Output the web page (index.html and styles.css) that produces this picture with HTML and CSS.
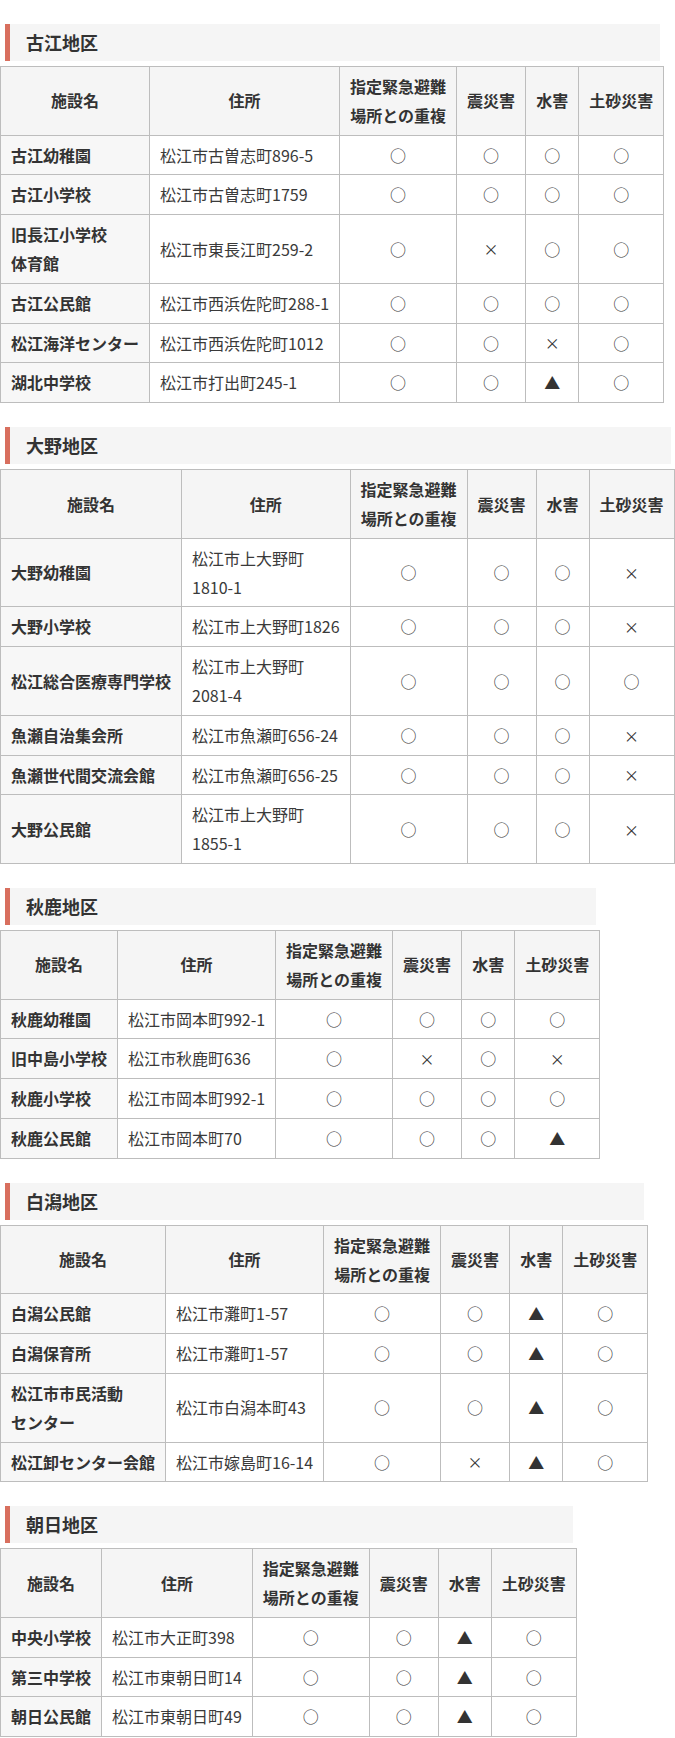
FILE: index.html
```html
<!DOCTYPE html>
<html lang="ja">
<head>
<meta charset="utf-8">
<title>指定避難所一覧</title>
<link rel="stylesheet" href="styles.css">
</head>
<body>
<main class="page">

<section class="area">
<h3 class="area-title">古江地区</h3>
<table class="shelter">
<thead>
<tr><th>施設名</th><th>住所</th><th>指定緊急避難<br>場所との重複</th><th>震災害</th><th>水害</th><th>土砂災害</th></tr>
</thead>
<tbody>
<tr><th>古江幼稚園</th><td>松江市古曽志町896-5</td><td class="m">○</td><td class="m">○</td><td class="m">○</td><td class="m">○</td></tr>
<tr><th>古江小学校</th><td>松江市古曽志町1759</td><td class="m">○</td><td class="m">○</td><td class="m">○</td><td class="m">○</td></tr>
<tr><th>旧長江小学校<br>体育館</th><td>松江市東長江町259-2</td><td class="m">○</td><td class="m x">×</td><td class="m">○</td><td class="m">○</td></tr>
<tr><th>古江公民館</th><td>松江市西浜佐陀町288-1</td><td class="m">○</td><td class="m">○</td><td class="m">○</td><td class="m">○</td></tr>
<tr><th>松江海洋センター</th><td>松江市西浜佐陀町1012</td><td class="m">○</td><td class="m">○</td><td class="m x">×</td><td class="m">○</td></tr>
<tr><th>湖北中学校</th><td>松江市打出町245-1</td><td class="m">○</td><td class="m">○</td><td class="m">▲</td><td class="m">○</td></tr>
</tbody>
</table>
</section>

<section class="area">
<h3 class="area-title">大野地区</h3>
<table class="shelter">
<thead>
<tr><th>施設名</th><th>住所</th><th>指定緊急避難<br>場所との重複</th><th>震災害</th><th>水害</th><th>土砂災害</th></tr>
</thead>
<tbody>
<tr><th>大野幼稚園</th><td>松江市上大野町<br>1810-1</td><td class="m">○</td><td class="m">○</td><td class="m">○</td><td class="m x">×</td></tr>
<tr><th>大野小学校</th><td>松江市上大野町1826</td><td class="m">○</td><td class="m">○</td><td class="m">○</td><td class="m x">×</td></tr>
<tr><th>松江総合医療専門学校</th><td>松江市上大野町<br>2081-4</td><td class="m">○</td><td class="m">○</td><td class="m">○</td><td class="m">○</td></tr>
<tr><th>魚瀬自治集会所</th><td>松江市魚瀬町656-24</td><td class="m">○</td><td class="m">○</td><td class="m">○</td><td class="m x">×</td></tr>
<tr><th>魚瀬世代間交流会館</th><td>松江市魚瀬町656-25</td><td class="m">○</td><td class="m">○</td><td class="m">○</td><td class="m x">×</td></tr>
<tr><th>大野公民館</th><td>松江市上大野町<br>1855-1</td><td class="m">○</td><td class="m">○</td><td class="m">○</td><td class="m x">×</td></tr>
</tbody>
</table>
</section>

<section class="area">
<h3 class="area-title">秋鹿地区</h3>
<table class="shelter">
<thead>
<tr><th>施設名</th><th>住所</th><th>指定緊急避難<br>場所との重複</th><th>震災害</th><th>水害</th><th>土砂災害</th></tr>
</thead>
<tbody>
<tr><th>秋鹿幼稚園</th><td>松江市岡本町992-1</td><td class="m">○</td><td class="m">○</td><td class="m">○</td><td class="m">○</td></tr>
<tr><th>旧中島小学校</th><td>松江市秋鹿町636</td><td class="m">○</td><td class="m x">×</td><td class="m">○</td><td class="m x">×</td></tr>
<tr><th>秋鹿小学校</th><td>松江市岡本町992-1</td><td class="m">○</td><td class="m">○</td><td class="m">○</td><td class="m">○</td></tr>
<tr><th>秋鹿公民館</th><td>松江市岡本町70</td><td class="m">○</td><td class="m">○</td><td class="m">○</td><td class="m">▲</td></tr>
</tbody>
</table>
</section>

<section class="area">
<h3 class="area-title">白潟地区</h3>
<table class="shelter">
<thead>
<tr><th>施設名</th><th>住所</th><th>指定緊急避難<br>場所との重複</th><th>震災害</th><th>水害</th><th>土砂災害</th></tr>
</thead>
<tbody>
<tr><th>白潟公民館</th><td>松江市灘町1-57</td><td class="m">○</td><td class="m">○</td><td class="m">▲</td><td class="m">○</td></tr>
<tr><th>白潟保育所</th><td>松江市灘町1-57</td><td class="m">○</td><td class="m">○</td><td class="m">▲</td><td class="m">○</td></tr>
<tr><th>松江市市民活動<br>センター</th><td>松江市白潟本町43</td><td class="m">○</td><td class="m">○</td><td class="m">▲</td><td class="m">○</td></tr>
<tr><th>松江卸センター会館</th><td>松江市嫁島町16-14</td><td class="m">○</td><td class="m x">×</td><td class="m">▲</td><td class="m">○</td></tr>
</tbody>
</table>
</section>

<section class="area">
<h3 class="area-title">朝日地区</h3>
<table class="shelter">
<thead>
<tr><th>施設名</th><th>住所</th><th>指定緊急避難<br>場所との重複</th><th>震災害</th><th>水害</th><th>土砂災害</th></tr>
</thead>
<tbody>
<tr><th>中央小学校</th><td>松江市大正町398</td><td class="m">○</td><td class="m">○</td><td class="m">▲</td><td class="m">○</td></tr>
<tr><th>第三中学校</th><td>松江市東朝日町14</td><td class="m">○</td><td class="m">○</td><td class="m">▲</td><td class="m">○</td></tr>
<tr><th>朝日公民館</th><td>松江市東朝日町49</td><td class="m">○</td><td class="m">○</td><td class="m">▲</td><td class="m">○</td></tr>
</tbody>
</table>
</section>

</main>
</body>
</html>
```

FILE: styles.css
```css
html, body {
  margin: 0;
  padding: 0;
  background: #fff;
}

body {
  font-family: "Noto Sans CJK JP", "Noto Sans", sans-serif;
  color: #333;
  font-size: 16px;
}

.page {
  display: flex;
  flex-direction: column;
  align-items: flex-start;
  gap: 24px;
  padding-top: 24px;
}

.area {
  display: flex;
  flex-direction: column;
  max-width: 100%;
}

.area-title {
  margin: 0 4px 5px 5px;
  padding: 5px 16px;
  border-left: 5px solid #d86f5e;
  background: #f5f5f5;
  font-size: 18px;
  line-height: 27px;
  font-weight: bold;
  color: #333;
}

.shelter {
  border-collapse: collapse;
  font-size: 16px;
  line-height: 1.8;
}

.shelter th,
.shelter td {
  border: 1px solid #bdbdbd;
  padding: 5px 10px;
  white-space: nowrap;
  vertical-align: middle;
}

.shelter thead th {
  background: #f5f5f5;
  font-weight: bold;
  text-align: center;
}

.shelter tbody th {
  background: #f7f7f7;
  font-weight: bold;
  text-align: left;
}

.shelter td {
  font-weight: normal;
  text-align: left;
  color: #3a3a3a;
}

.shelter td.m {
  text-align: center;
  color: #333;
}

.shelter td.x {
  font-size: 15px;
}
```
